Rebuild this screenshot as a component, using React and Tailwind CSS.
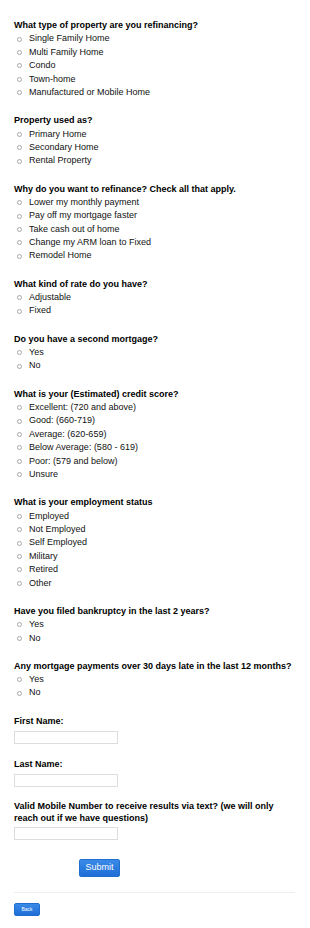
const sections = [
  { q: "What type of property are you refinancing?", opts: ["Single Family Home", "Multi Family Home", "Condo", "Town-home", "Manufactured or Mobile Home"] },
  { q: "Property used as?", opts: ["Primary Home", "Secondary Home", "Rental Property"] },
  { q: "Why do you want to refinance? Check all that apply.", opts: ["Lower my monthly payment", "Pay off my mortgage faster", "Take cash out of home", "Change my ARM loan to Fixed", "Remodel Home"] },
  { q: "What kind of rate do you have?", opts: ["Adjustable", "Fixed"] },
  { q: "Do you have a second mortgage?", opts: ["Yes", "No"] },
  { q: "What is your (Estimated) credit score?", opts: ["Excellent: (720 and above)", "Good: (660-719)", "Average: (620-659)", "Below Average: (580 - 619)", "Poor: (579 and below)", "Unsure"] },
  { q: "What is your employment status", opts: ["Employed", "Not Employed", "Self Employed", "Military", "Retired", "Other"] },
  { q: "Have you filed bankruptcy in the last 2 years?", opts: ["Yes", "No"] },
  { q: "Any mortgage payments over 30 days late in the last 12 months?", opts: ["Yes", "No"] },
];

function Radio() {
  return <span className="inline-block h-[5px] w-[5px] rounded-full border border-[#a8a8a8] bg-white" />;
}

export default function App() {
  return (
    <div className="bg-white px-[14px] pt-[19px] text-black [font-family:'Liberation_Sans',Arial,sans-serif]">
      {sections.map((s, i) => (
        <div key={i} className="mb-[14.8px]">
          <div className="text-[9px] font-bold leading-[13.4px]">{s.q}</div>
          {s.opts.map((o) => (
            <div key={o} className="flex h-[13.4px] items-center text-[9px] text-[#111]">
              <span className="ml-[3px] mr-[7px] flex items-center"><Radio /></span>
              {o}
            </div>
          ))}
        </div>
      ))}
      <div className="text-[9px] font-bold leading-[13px]">First Name:</div>
      <div className="mt-[3px] h-[13px] w-[104px] border border-[#ddd]" />
      <div className="mt-[14px] text-[9px] font-bold leading-[13px]">Last Name:</div>
      <div className="mt-[3px] h-[13px] w-[104px] border border-[#ddd]" />
      <div className="mt-[13px] text-[9px] font-bold leading-[12px]">
        Valid Mobile Number to receive results via text? (we will only reach out if we have questions)
      </div>
      <div className="mt-[3px] h-[13px] w-[104px] border border-[#ddd]" />
      <div className="mt-[19px] flex pl-[65px]">
        <button type="button" className="h-[18px] w-[41px] rounded-[2px] border border-[#1f6fd1] bg-gradient-to-b from-[#3a8ae8] to-[#1e6ed6] text-[9px] leading-none text-white">
          Submit
        </button>
      </div>
      <div className="mt-[15px] mr-[1px] border-t border-[#eee]" />
      <div className="mt-[10px] flex pb-[11px]">
        <button type="button" className="h-[13px] w-[26px] rounded-[2px] border border-[#1f6fd1] bg-gradient-to-b from-[#3a8ae8] to-[#1e6ed6] text-[5px] leading-none text-white">
          Back
        </button>
      </div>
    </div>
  );
}
